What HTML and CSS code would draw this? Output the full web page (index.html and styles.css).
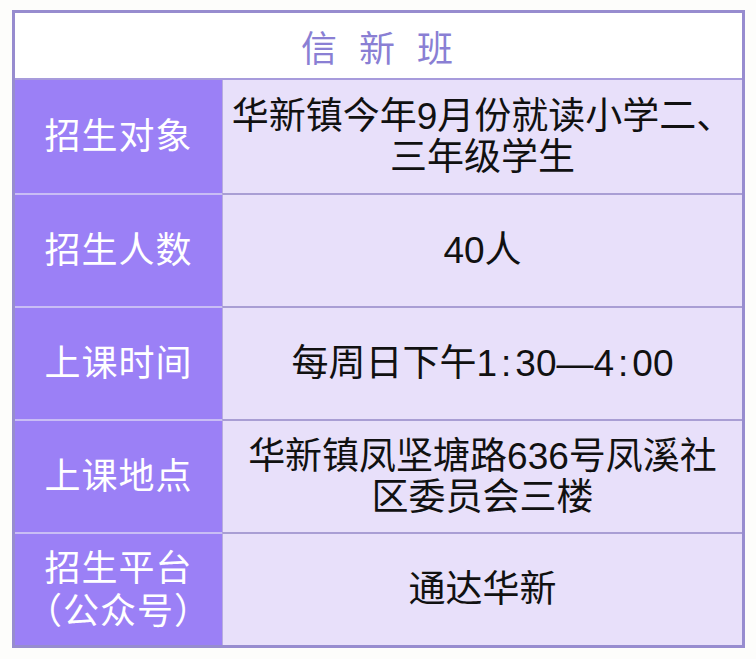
FILE: index.html
```html
<!DOCTYPE html>
<html lang="zh">
<head>
<meta charset="utf-8">
<link rel="stylesheet" href="styles.css">
</head>
<body>
<div class="card">
  <div class="title">信 新 班</div>
  <div class="label">招生对象</div>
  <div class="value">华新镇今年9月份就读小学二、<br>三年级学生</div>
  <div class="label">招生人数</div>
  <div class="value">40人</div>
  <div class="label">上课时间</div>
  <div class="value">每周日下午1<span class="colon">:</span>30—4<span class="colon">:</span>00</div>
  <div class="label">上课地点</div>
  <div class="value">华新镇凤坚塘路636号凤溪社<br>区委员会三楼</div>
  <div class="label">招生平台<br>（公众号）</div>
  <div class="value">通达华新</div>
</div>
</body>
</html>
```
FILE: styles.css
```css
html, body {
  margin: 0;
  padding: 0;
  background: #fdfdfb;
}
body {
  font-family: "Liberation Sans", "Noto Sans CJK SC", sans-serif;
}
.card {
  margin: 10px 0 0 12px;
  width: 733px;
  box-sizing: border-box;
  border: 3px solid #978ccf;
  display: grid;
  grid-template-columns: 207px 1fr;
  grid-template-rows: 67px repeat(5, 113px);
}
.title {
  grid-column: 1 / 3;
  background: #ffffff;
  color: #8a7fd4;
  font-size: 36px;
  letter-spacing: 3px;
  word-spacing: 6px;
  display: flex;
  align-items: center;
  justify-content: center;
  border-bottom: 2px solid #a79bdc;
}
.label {
  background: #9b80f6;
  color: #ffffff;
  font-size: 36px;
  letter-spacing: 1px;
  line-height: 43px;
  display: flex;
  align-items: center;
  justify-content: center;
  text-align: center;
  border-top: 2px solid #c9bdf5;
}
.label:nth-child(2) { border-top: none; }
.value {
  background: #e8e0fa;
  color: #111111;
  font-size: 37px;
  line-height: 41px;
  display: flex;
  align-items: center;
  justify-content: center;
  text-align: center;
  border-top: 2px solid #a99ed4;
  border-left: 1px solid #b7acdf;
}
.value:nth-child(3) { border-top: none; }
.colon {
  padding: 0 4px;
}
```
